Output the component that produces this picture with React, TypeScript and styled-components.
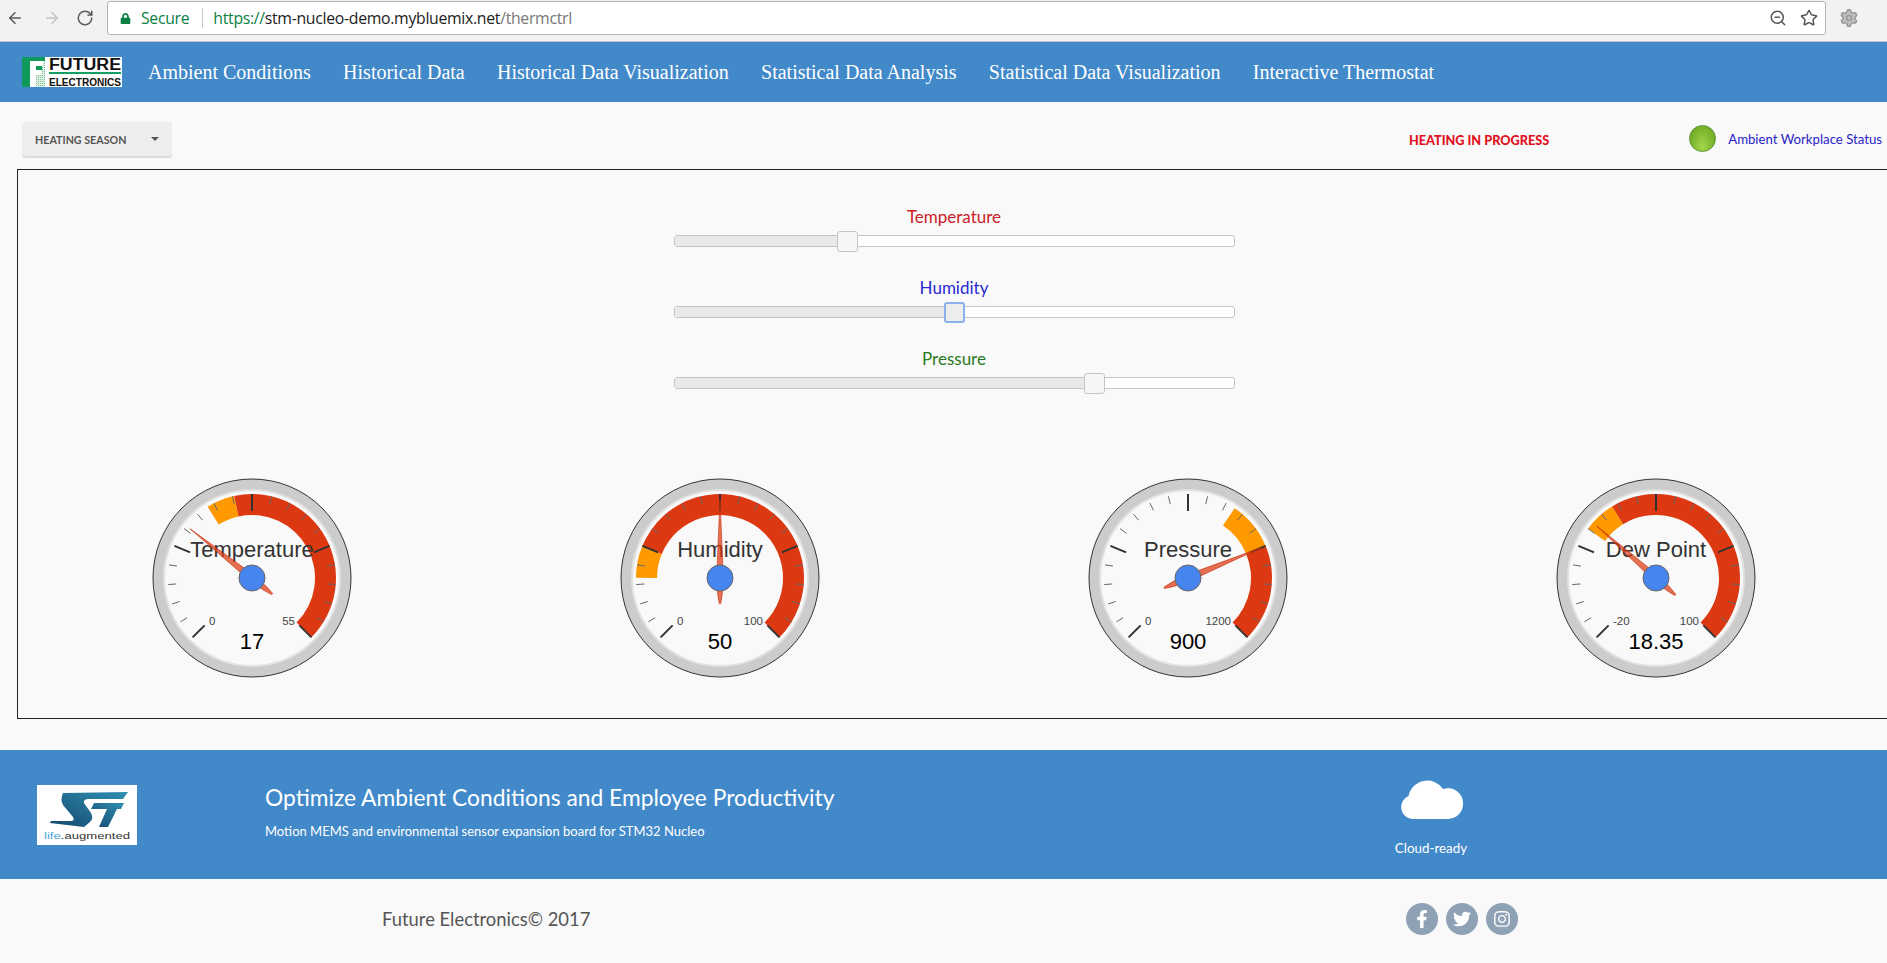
import styled, { createGlobalStyle } from "styled-components";
import { ArrowLeft, ArrowRight, RotateCw, Settings, Star, ZoomOut } from "lucide-react";
import { FaFacebookF, FaInstagram, FaLock, FaTwitter } from "react-icons/fa";

const BLUE = "#4289ca";
const UI_FONT = '"Lato", "Noto Sans", sans-serif';

const GlobalStyle = createGlobalStyle`
  html, body {
    margin: 0;
    padding: 0;
    height: 100%;
    overflow: hidden;
    background: #f9f9f9;
  }
`;

const Page = styled.div`
  width: 1887px;
  height: 963px;
  overflow: hidden;
  font-family: ${UI_FONT};
`;

/* browser chrome */
const BrowserBar = styled.div`
  display: flex;
  align-items: flex-start;
  height: 42px;
  padding: 1px 0 0 6px;
  box-sizing: border-box;
  background: #f2f2f2;
  border-bottom: 1px solid #c4c4c4;
`;

const ChromeIcon = styled.span<{ $left: number }>`
  display: flex;
  align-items: center;
  height: 34px;
  margin-left: ${(p) => p.$left}px;
  color: #5a5a5a;
`;

const UrlBox = styled.div`
  display: flex;
  align-items: center;
  width: 1719px;
  height: 34px;
  margin-left: 13px;
  padding-left: 12px;
  box-sizing: border-box;
  background: #fff;
  border: 1px solid #b4b4b4;
  border-radius: 3px;
  font-family: "Open Sans", sans-serif;
  font-size: 15.8px;
  letter-spacing: -0.3px;
  color: #222;
`;

const Secure = styled.span`
  display: flex;
  align-items: center;
  gap: 10px;
  color: #0b8043;
  padding-right: 13px;
  border-right: 1px solid #c8c8c8;
  margin-right: 10px;
  height: 20px;
`;

const Scheme = styled.span`
  color: #0b8043;
`;

const UrlPath = styled.span`
  color: #777;
`;

const UrlActions = styled.div`
  display: flex;
  align-items: center;
  gap: 13px;
  margin-left: auto;
  margin-right: 7px;
  color: #555;
`;

/* navbar */
const NavBar = styled.nav`
  display: flex;
  align-items: center;
  height: 60px;
  padding-left: 22px;
  background: ${BLUE};
`;

const NavLinks = styled.div`
  display: flex;
  gap: 32.3px;
  margin-left: 26px;
`;

const NavLink = styled.a`
  font-family: "Liberation Serif", serif;
  font-size: 20px;
  color: #fff;
  text-decoration: none;
`;

/* toolbar */
const Toolbar = styled.div`
  display: flex;
  align-items: center;
  height: 36px;
  padding: 20px 5px 11px 22px;
`;

const SeasonButton = styled.button`
  display: flex;
  align-items: center;
  justify-content: space-between;
  width: 150px;
  height: 34px;
  margin-top: -2px;
  padding: 0 13px;
  box-sizing: border-box;
  background: #eee;
  border: none;
  border-radius: 3px;
  box-shadow: 0 2px 0 #dcdcdc;
  font-family: ${UI_FONT};
  font-size: 10.7px;
  font-weight: 700;
  color: #555;
`;

const Caret = styled.span`
  width: 0;
  height: 0;
  border-left: 4px solid transparent;
  border-right: 4px solid transparent;
  border-top: 4px solid #555;
`;

const HeatingStatus = styled.span`
  margin-left: auto;
  margin-right: 140px;
  font-size: 12.7px;
  font-weight: 900;
  color: #e0101c;
`;

const Lamp = styled.span`
  width: 27px;
  height: 27px;
  margin-top: -4px;
  box-sizing: border-box;
  border: 1px solid #5d9130;
  border-radius: 50%;
  background: radial-gradient(ellipse at 50% 85%, #a5d64c 0%, #7fb82f 55%, #66a326 100%);
`;

const WorkplaceStatus = styled.span`
  margin-left: 12px;
  margin-top: -3px;
  font-size: 13.2px;
  color: #2a1ec8;
`;

/* main panel */
const Panel = styled.section`
  width: 1874px;
  box-sizing: border-box;
  margin-left: 17px;
  padding: 37px 0 40px;
  border: 1px solid #222;
`;

const Sliders = styled.div`
  display: flex;
  flex-direction: column;
  gap: 31px;
  width: 561px;
  margin: 0 auto 89px;
`;

const SliderGroup = styled.div`
  display: flex;
  flex-direction: column;
  gap: 8px;
`;

const SliderLabel = styled.div<{ $color: string }>`
  line-height: 20px;
  font-size: 17px;
  text-align: center;
  color: ${(p) => p.$color};
`;

const Track = styled.div`
  position: relative;
  height: 12px;
  box-sizing: border-box;
  background: #fff;
  border: 1px solid #c5c5c5;
  border-radius: 3px;
`;

const TrackFill = styled.div`
  height: 100%;
  border-radius: 2px 0 0 2px;
  background: #e9e9e9;
`;

const Thumb = styled.span<{ $focused?: boolean }>`
  position: absolute;
  top: -5px;
  width: 21px;
  height: 21px;
  margin-left: -10px;
  box-sizing: border-box;
  border-radius: 3px;
  background: ${(p) => (p.$focused ? "#ededed" : "#f6f6f6")};
  border: ${(p) => (p.$focused ? "2px solid #8cb0e8" : "1px solid #c5c5c5")};
`;

const Gauges = styled.div`
  display: grid;
  grid-template-columns: repeat(4, 468px);
`;

const GaugeCell = styled.div`
  display: flex;
  justify-content: center;
`;

const GaugeTitle = styled.text`
  font-family: "Liberation Sans", Arial, sans-serif;
  font-size: 22px;
  fill: #333;
  text-anchor: middle;
`;

const GaugeValue = styled.text`
  font-family: "Liberation Sans", Arial, sans-serif;
  font-size: 22px;
  fill: #000;
  text-anchor: middle;
`;

const GaugeLimit = styled.text<{ $end?: boolean }>`
  font-family: "Liberation Sans", Arial, sans-serif;
  font-size: 11.5px;
  fill: #444;
  text-anchor: ${(p) => (p.$end ? "end" : "start")};
`;

/* footer */
const Promo = styled.section`
  display: grid;
  grid-template-columns: 265px 1130px 72px;
  height: 129px;
  margin-top: 31px;
  background: ${BLUE};
  color: #fff;
`;

const PromoLogo = styled.div`
  padding: 35px 0 0 37px;
`;

const PromoText = styled.div`
  padding-top: 32px;
`;

const PromoTitle = styled.h2`
  margin: 0;
  line-height: 30px;
  font-size: 22.8px;
  font-weight: 400;
`;

const PromoSub = styled.p`
  margin: 10px 0 0;
  line-height: 18px;
  font-size: 13px;
`;

const CloudCell = styled.div`
  display: flex;
  flex-direction: column;
  align-items: center;
  padding-top: 29px;
  font-size: 13.4px;
  white-space: nowrap;
  gap: 21px;
`;

const BottomBar = styled.footer`
  display: grid;
  grid-template-columns: 1406px auto;
  align-items: center;
  height: 80px;
`;

const Copyright = styled.span`
  padding-left: 382px;
  font-size: 18.4px;
  color: #555;
`;

const Socials = styled.div`
  display: flex;
  gap: 8px;
`;

const SocialIcon = styled.a`
  display: flex;
  align-items: center;
  justify-content: center;
  width: 32px;
  height: 32px;
  border-radius: 50%;
  background: #8fa1b5;
  color: #fff;
  font-size: 18px;
`;

const polar = (r: number, deg: number) => {
  const a = ((deg - 90) * Math.PI) / 180;
  return [100 + r * Math.cos(a), 100 + r * Math.sin(a)];
};

const bandPath = (from: number, to: number) => {
  const [x1, y1] = polar(84, from);
  const [x2, y2] = polar(84, to);
  const [x3, y3] = polar(63, to);
  const [x4, y4] = polar(63, from);
  const big = to - from > 180 ? 1 : 0;
  return `M${x1} ${y1}A84 84 0 ${big} 1 ${x2} ${y2}L${x3} ${y3}A63 63 0 ${big} 0 ${x4} ${y4}Z`;
};

type GaugeProps = {
  title: string;
  min: number;
  max: number;
  value: number;
  orange: [number, number];
  red: [number, number];
};

const Gauge = ({ title, min, max, value, orange, red }: GaugeProps) => {
  const angle = (v: number) => -135 + (270 * (v - min)) / (max - min);
  const ticks = Array.from({ length: 21 }, (_, i) => -135 + i * 13.5);
  return (
    <svg width="200" height="200" viewBox="0 0 200 200">
      <circle cx="100" cy="100" r="99" fill="#ccc" stroke="#333" strokeWidth="1" />
      <circle cx="100" cy="100" r="88" fill="#f9f9f9" stroke="#e2e2e2" strokeWidth="2" />
      <path d={bandPath(angle(orange[0]), angle(orange[1]))} fill="#f90" />
      <path d={bandPath(angle(red[0]), angle(red[1]))} fill="#dc3912" />
      {ticks.map((t, i) => {
        const major = i % 5 === 0;
        const [x1, y1] = polar(84, t);
        const [x2, y2] = polar(major ? 67 : 76, t);
        return (
          <line
            key={t}
            x1={x1}
            y1={y1}
            x2={x2}
            y2={y2}
            stroke={major ? "#333" : "#666"}
            strokeWidth={major ? 2 : 1}
          />
        );
      })}
      <GaugeTitle x="100" y="79">
        {title}
      </GaugeTitle>
      <GaugeLimit x="57" y="147">
        {min}
      </GaugeLimit>
      <GaugeLimit x="143" y="147" $end>
        {max}
      </GaugeLimit>
      <GaugeValue x="100" y="171">
        {value}
      </GaugeValue>
      <path
        d="M0 -79L3.4 0Q3 15 .8 25.5Q0 26.3 -.8 25.5Q-3 15 -3.4 0Z"
        transform={`translate(100 100) rotate(${angle(value)})`}
        fill="#dc3912"
        fillOpacity="0.72"
        stroke="#c63310"
        strokeWidth="0.6"
      />
      <circle cx="100" cy="100" r="13" fill="#4684ee" stroke="#666" strokeWidth="1" />
    </svg>
  );
};

const FutureLogo = () => (
  <svg width="100" height="30" viewBox="0 0 100 30">
    <defs>
      <pattern id="hatch" width="2" height="2" patternUnits="userSpaceOnUse">
        <rect width="2" height="2" fill="#dcefe3" />
        <rect width="1" height="1" fill="#7cc49c" />
      </pattern>
    </defs>
    <rect width="100" height="30" fill="#fff" />
    <rect width="23" height="30" fill="url(#hatch)" />
    <path d="M0 0H23V4H14V9H20V13H14V18H12V30H0Z" fill="#0f9a5b" />
    <path d="M8 4H21V9H14V13H19V18H14V30H8Z" fill="#fff" />
    <text x="27" y="12.5" fontFamily="Liberation Sans" fontSize="16" fontWeight="700" textLength="72" lengthAdjust="spacingAndGlyphs" fill="#111">
      FUTURE
    </text>
    <rect x="27" y="15" width="72" height="2" fill="#14a064" />
    <text x="27" y="28.5" fontFamily="Liberation Sans" fontSize="10" fontWeight="700" textLength="72" lengthAdjust="spacingAndGlyphs" fill="#111">
      ELECTRONICS
    </text>
  </svg>
);

const StLogo = () => (
  <svg width="100" height="60" viewBox="0 0 100 60">
    <defs>
      <linearGradient id="st" x1="0" y1="1" x2="1" y2="0">
        <stop offset="0" stopColor="#17496f" />
        <stop offset="1" stopColor="#2f8fb3" />
      </linearGradient>
    </defs>
    <rect width="100" height="60" fill="#fff" />
    <path d="M26 8L91 7L86 14H52Q46 14 47 18L54 28Q57 33 53 37L47 42L13 38L14 36H34Q38 36 36 32L26 20Q23 15 26 8Z" fill="url(#st)" />
    <path d="M57 18H87L84 24H80L71 42H62L70 24H54Z" fill="url(#st)" />
    <text x="7" y="54" fontFamily="Liberation Sans" fontSize="9.5" textLength="86" lengthAdjust="spacingAndGlyphs">
      <tspan fill="#4aa6d8">life</tspan>
      <tspan fill="#333">.augmented</tspan>
    </text>
  </svg>
);

const CloudIcon = () => (
  <svg width="63" height="40" viewBox="0 0 63 40">
    <path d="M12 40A12 12 0 0 1 8.5 17A19 19 0 0 1 43 10A15 15 0 0 1 63 25A15 15 0 0 1 48 40Z" fill="#fff" />
  </svg>
);

const NAV_ITEMS = [
  "Ambient Conditions",
  "Historical Data",
  "Historical Data Visualization",
  "Statistical Data Analysis",
  "Statistical Data Visualization",
  "Interactive Thermostat",
];

const SLIDERS = [
  { label: "Temperature", color: "#cc2027", percent: 30.8 },
  { label: "Humidity", color: "#2a2ad0", percent: 50, focused: true },
  { label: "Pressure", color: "#2a7a22", percent: 75 },
];

const GAUGES: GaugeProps[] = [
  { title: "Temperature", min: 0, max: 55, value: 17, orange: [21, 25], red: [25, 55] },
  { title: "Humidity", min: 0, max: 100, value: 50, orange: [16.7, 25], red: [25, 100] },
  { title: "Pressure", min: 0, max: 1200, value: 900, orange: [750, 900], red: [900, 1200] },
  { title: "Dew Point", min: -20, max: 100, value: 18.35, orange: [16, 26], red: [26, 100] },
];

const App = () => {
  return (
    <Page>
      <GlobalStyle />
      <BrowserBar>
        <ChromeIcon $left={0}>
          <ArrowLeft size={18} />
        </ChromeIcon>
        <ChromeIcon $left={19}>
          <ArrowRight size={18} color="#c4c4c4" />
        </ChromeIcon>
        <ChromeIcon $left={15}>
          <RotateCw size={18} />
        </ChromeIcon>
        <UrlBox>
          <Secure>
            <FaLock size={11} />
            Secure
          </Secure>
          <Scheme>https://</Scheme>
          stm-nucleo-demo.mybluemix.net
          <UrlPath>/thermctrl</UrlPath>
          <UrlActions>
            <ZoomOut size={18} />
            <Star size={18} />
          </UrlActions>
        </UrlBox>
        <ChromeIcon $left={13}>
          <Settings size={20} color="#9a9a9a" fill="#c0c0c0" />
        </ChromeIcon>
      </BrowserBar>

      <NavBar>
        <FutureLogo />
        <NavLinks>
          {NAV_ITEMS.map((item) => (
            <NavLink key={item}>{item}</NavLink>
          ))}
        </NavLinks>
      </NavBar>

      <Toolbar>
        <SeasonButton>
          HEATING SEASON
          <Caret />
        </SeasonButton>
        <HeatingStatus>HEATING IN PROGRESS</HeatingStatus>
        <Lamp />
        <WorkplaceStatus>Ambient Workplace Status</WorkplaceStatus>
      </Toolbar>

      <Panel>
        <Sliders>
          {SLIDERS.map((s) => (
            <SliderGroup key={s.label}>
              <SliderLabel $color={s.color}>{s.label}</SliderLabel>
              <Track>
                <TrackFill style={{ width: `${s.percent}%` }} />
                <Thumb $focused={s.focused} style={{ left: `${s.percent}%` }} />
              </Track>
            </SliderGroup>
          ))}
        </Sliders>
        <Gauges>
          {GAUGES.map((g) => (
            <GaugeCell key={g.title}>
              <Gauge {...g} />
            </GaugeCell>
          ))}
        </Gauges>
      </Panel>

      <Promo>
        <PromoLogo>
          <StLogo />
        </PromoLogo>
        <PromoText>
          <PromoTitle>Optimize Ambient Conditions and Employee Productivity</PromoTitle>
          <PromoSub>Motion MEMS and environmental sensor expansion board for STM32 Nucleo</PromoSub>
        </PromoText>
        <CloudCell>
          <CloudIcon />
          Cloud-ready
        </CloudCell>
      </Promo>

      <BottomBar>
        <Copyright>Future Electronics© 2017</Copyright>
        <Socials>
          <SocialIcon>
            <FaFacebookF />
          </SocialIcon>
          <SocialIcon>
            <FaTwitter />
          </SocialIcon>
          <SocialIcon>
            <FaInstagram />
          </SocialIcon>
        </Socials>
      </BottomBar>
    </Page>
  );
};

export default App;
